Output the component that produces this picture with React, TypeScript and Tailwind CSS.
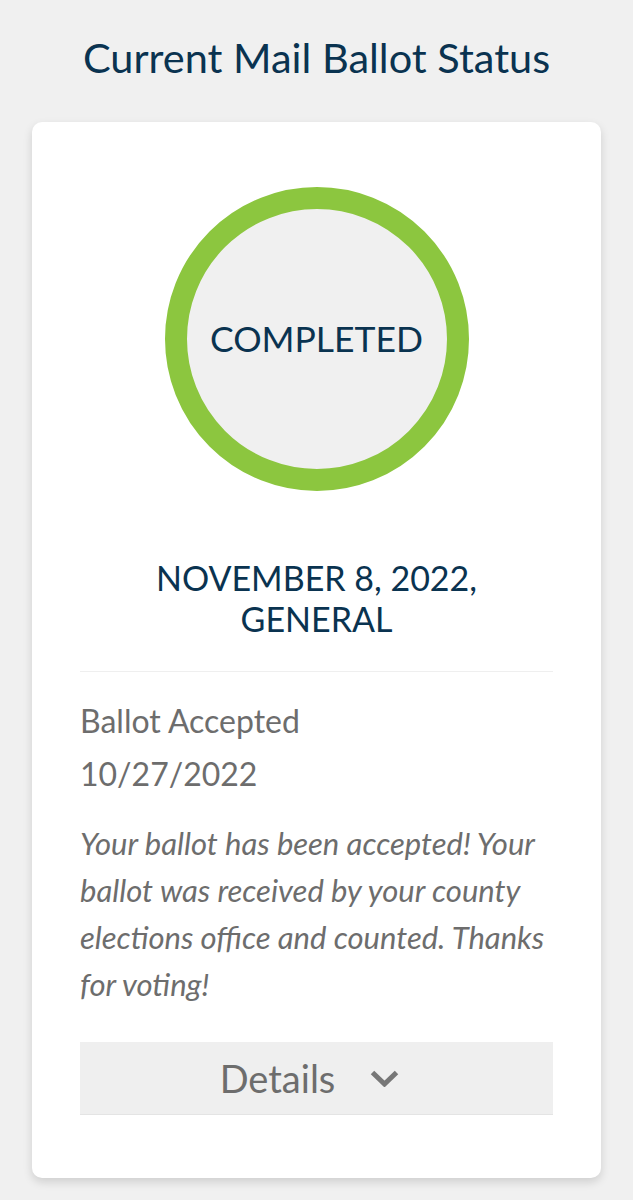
import React from "react";

export default function App() {
  const font = { fontFamily: "Lato, 'Noto Sans', sans-serif" };
  return (
    <div className="min-h-screen bg-[#f0f0f0] pt-[32px] pb-[20px]" style={font}>
      <h1 className="text-center text-[41.5px] leading-[50px] text-[#0a3350] font-normal">
        Current Mail Ballot Status
      </h1>
      <div className="mx-[32px] mt-[40px] rounded-[10px] bg-white px-[48px] pt-[65px] pb-[63px] shadow-[0_4px_10px_rgba(0,0,0,0.14)]">
        <div className="flex justify-center">
          <div className="flex h-[304px] w-[304px] items-center justify-center rounded-full border-[22px] border-[#8cc63f] bg-[#f0f0f0]">
            <span className="text-[35.5px] leading-[42px] text-[#0a3350]">COMPLETED</span>
          </div>
        </div>
        <div className="mt-[66px] text-center text-[34px] leading-[41px] text-[#0a3350]">
          NOVEMBER 8, 2022,
          <br />
          GENERAL
        </div>
        <div className="mt-[32px] h-px bg-[#efefef]" />
        <div className="mt-[22px] text-[32px] leading-[53px] text-[#6d6d6d]">
          <div>Ballot Accepted</div>
          <div>10/27/2022</div>
        </div>
        <p className="mt-[20px] text-[31px] leading-[47px] italic text-[#6d6d6d]">
          Your ballot has been accepted! Your ballot was received by your county elections office and counted. Thanks for voting!
        </p>
        <button className="mt-[34px] flex h-[73px] w-full items-center justify-center gap-[35px] border-b border-[#e4e4e4] bg-[#efefef] pr-[14px]">
          <span className="text-[38px] leading-[45px] text-[#6d6d6d]">Details</span>
          <svg width="29" height="17" viewBox="0 0 29 17" fill="none">
            <path d="M2.5 2.5 L14.5 14 L26.5 2.5" stroke="#777777" strokeWidth="5" strokeLinecap="butt" strokeLinejoin="miter" />
          </svg>
        </button>
      </div>
    </div>
  );
}
